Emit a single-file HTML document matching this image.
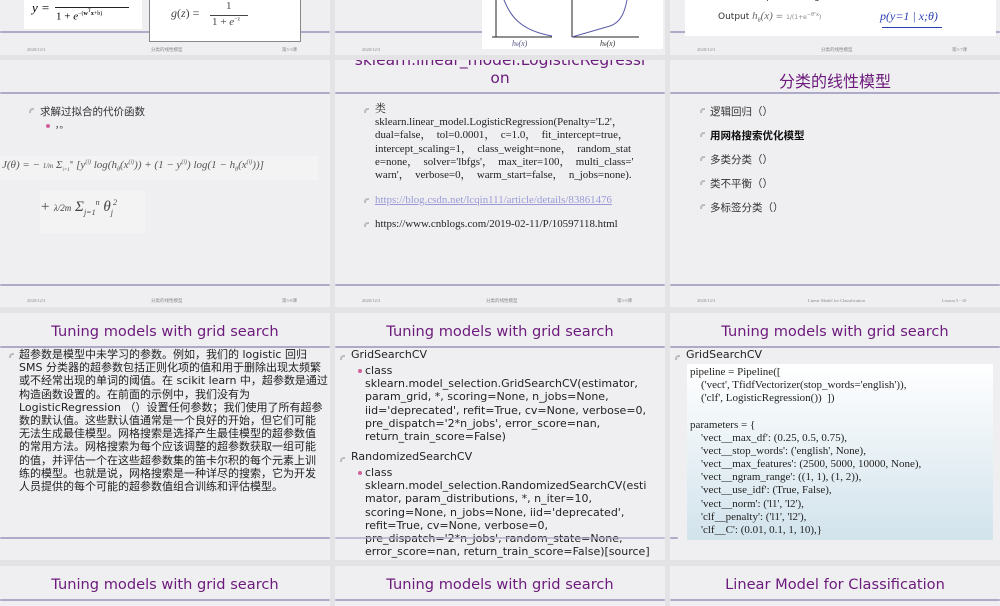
<!DOCTYPE html>
<html><head><meta charset="utf-8"><style>
*{margin:0;padding:0;box-sizing:border-box}
body{width:1000px;height:600px;background:#e3e3e6;position:relative;overflow:hidden;font-family:"DejaVu Sans","Noto Sans CJK SC",sans-serif}
.s{position:absolute;background:#efeff1;overflow:hidden}
.a{position:absolute;white-space:nowrap}
.ln{position:absolute;height:2px;background:#aeabc9;border-radius:1px}
.ft{position:absolute;font-size:4.5px;color:#888;font-family:"Liberation Serif","Noto Sans CJK SC",serif}
.t{position:absolute;left:0;right:0;text-align:center;color:#6c1a7c;font-size:14.6px}
.b{position:absolute;width:5px;height:5px;border-left:2px solid #bbb;border-top:2px solid #bbb;border-radius:4px 0 0 0}
.dot{position:absolute;width:4px;height:4px;border-radius:50%;background:#d4609a}
.sf{font-family:"Liberation Serif","Noto Serif CJK SC",serif}
.cj{font-family:"DejaVu Sans","Noto Sans CJK SC",sans-serif}
</style></head><body>

<!-- Row 0 -->
<div class="s" style="left:0;top:0;width:330px;height:55px">
 <div class="ln" style="left:0;top:31px;width:330px"></div>
 <div class="a" style="left:24px;top:0;width:118px;height:29px;background:#fff"></div>
 <div class="a sf" style="left:32px;top:0;font-size:13px;font-style:italic">y =</div>
 <div class="a" style="left:55px;top:7px;width:74px;height:1px;background:#222"></div>
 <div class="a sf" style="left:56px;top:9px;font-size:11px">1 + <i>e</i><sup style="font-size:6px">−(<b>w</b><sup>T</sup><b>x</b>+b)</sup></div>
 <div class="a" style="left:149px;top:-2px;width:152px;height:44px;background:#fff;border:1px solid #888"></div>
 <div class="a sf" style="left:171px;top:6px;font-size:12px;color:#444"><i>g</i>(<i>z</i>) =</div>
 <div class="a" style="left:210px;top:15px;width:38px;height:1px;background:#444"></div>
 <div class="a sf" style="left:226px;top:0;font-size:11px;color:#444">1</div>
 <div class="a sf" style="left:212px;top:16px;font-size:11px;color:#444">1 + <i>e</i><sup style="font-size:6px">−z</sup></div>
 <div class="ft" style="left:27px;top:47px">2020/12/3</div>
 <div class="ft" style="left:151px;top:47px">分类的线性模型</div>
 <div class="ft" style="left:282px;top:47px">第5-5课</div>
</div>
<div class="s" style="left:335px;top:0;width:330px;height:55px">
 <div class="ln" style="left:0;top:31px;width:150px"></div>
 <div class="a" style="left:147px;top:0;width:181px;height:49px;background:#fff"></div>
 <svg class="a" style="left:147px;top:0" width="181" height="49">
  <path d="M14 0V37M10 37H70" stroke="#222" fill="none"/>
  <path d="M22 0C28 14 36 30 70 36" stroke="#5a5aa8" fill="none"/>
  <path d="M90 0V37M90 37H157" stroke="#222" fill="none"/>
  <path d="M90 37L128 26C140 22 143 10 145 0" stroke="#5a5aa8" fill="none"/>
  <text x="30" y="46" font-size="8" font-style="italic" fill="#558" font-family="Liberation Serif">h<tspan font-size="5">θ</tspan>(x)</text>
  <text x="118" y="46" font-size="8" font-style="italic" fill="#333" font-family="Liberation Serif">h<tspan font-size="5">θ</tspan>(x)</text>
 </svg>
 <div class="ft" style="left:27px;top:47px">2020/12/3</div>
</div>
<div class="s" style="left:670px;top:0;width:330px;height:55px">
 <div class="ln" style="left:0;top:31px;width:330px"></div>
 <div class="a" style="left:15px;top:0;width:311px;height:36px;background:#fff"></div>
 <div class="a" style="left:48px;top:-8px;font-size:9px;color:#333">To make a prediction given new x:</div>
 <div class="a" style="left:48px;top:10px;font-size:9px;color:#333">Output <span class="sf" style="font-style:italic;font-size:11px;color:#666">h<sub style="font-size:6px">θ</sub>(x)</span> <span style="color:#888">= <span style="font-size:6px">1/(1+e<sup>−θᵀx</sup>)</span></span></div>
 <div class="a" style="left:210px;top:9px;font-size:12px;color:#2a3fb0;font-style:italic;font-family:'Liberation Serif',serif">p(y=1 | x;θ)</div>
 <div class="a" style="left:212px;top:27px;width:60px;height:1px;background:#2a3fb0"></div>
 <div class="ft" style="left:27px;top:47px">2020/12/3</div>
 <div class="ft" style="left:151px;top:47px">分类的线性模型</div>
 <div class="ft" style="left:282px;top:47px">第5-7课</div>
</div>

<!-- Row 1 -->
<div class="s" style="left:0;top:60px;width:330px;height:247px">
 <div class="ln" style="left:0;top:32px;width:330px"></div>
 <div class="b" style="left:29px;top:48px"></div>
 <div class="a cj" style="left:40px;top:44px;font-size:10.5px;color:#333">求解过拟合的代价函数</div>
 <div class="dot" style="left:46px;top:64px"></div>
 <div class="a" style="left:55px;top:58px;font-size:9px;color:#333">，。</div>
 <div class="a" style="left:0;top:96px;width:318px;height:24px;background:#f3f3f3"></div>
 <div class="a sf" style="left:2px;top:99px;font-size:11px;color:#555;font-style:italic">J(θ) = − <span style="font-size:7px">1/m</span> Σ<sub style="font-size:5px">i=1</sub><sup style="font-size:5px">m</sup> [y<sup style="font-size:6px">(i)</sup> log(h<sub style="font-size:6px">θ</sub>(x<sup style="font-size:6px">(i)</sup>)) + (1 − y<sup style="font-size:6px">(i)</sup>) log(1 − h<sub style="font-size:6px">θ</sub>(x<sup style="font-size:6px">(i)</sup>))]</div>
 <div class="a" style="left:40px;top:131px;width:105px;height:42px;background:#f3f3f3"></div>
 <div class="a sf" style="left:40px;top:138px;font-size:15px;color:#444;font-style:italic">+ <span style="font-size:9px">λ/2m</span> Σ<sub style="font-size:8px">j=1</sub><sup style="font-size:8px">n</sup> θ<sub style="font-size:8px">j</sub><sup style="font-size:8px">2</sup></div>
 <div class="ln" style="left:0;top:224px;width:330px"></div>
 <div class="ft" style="left:27px;top:238px">2020/12/3</div>
 <div class="ft" style="left:151px;top:238px">分类的线性模型</div>
 <div class="ft" style="left:282px;top:238px">第5-8课</div>
</div>
<div class="s" style="left:335px;top:60px;width:330px;height:247px">
 <div class="t" style="top:-9px;line-height:18px;font-size:15.5px">sklearn.linear_model.LogisticRegressi<br>on</div>
 <div class="ln" style="left:0;top:32px;width:330px"></div>
 <div class="b" style="left:29px;top:48px"></div>
 <div class="a sf" style="left:40px;top:43px;font-size:10.9px;line-height:13.2px;color:#222">类<br>sklearn.linear_model.LogisticRegression(Penalty='L2'，<br>dual=false，&nbsp; tol=0.0001，&nbsp; c=1.0，&nbsp; fit_intercept=true，<br>intercept_scaling=1，&nbsp; class_weight=none，&nbsp; random_stat<br>e=none，&nbsp; solver='lbfgs'，&nbsp; max_iter=100，&nbsp; multi_class='<br>warn'，&nbsp; verbose=0，&nbsp; warm_start=false，&nbsp; n_jobs=none).</div>
 <div class="b" style="left:29px;top:138px"></div>
 <div class="a sf" style="left:40px;top:134px;font-size:10.9px;color:#9a9ad8;text-decoration:underline">https://blog.csdn.net/lcqin111/article/details/83861476</div>
 <div class="b" style="left:29px;top:162px"></div>
 <div class="a sf" style="left:40px;top:158px;font-size:10.9px;color:#222">https://www.cnblogs.com/2019-02-11/P/10597118.html</div>
 <div class="ln" style="left:0;top:224px;width:330px"></div>
 <div class="ft" style="left:27px;top:238px">2020/12/3</div>
 <div class="ft" style="left:151px;top:238px">分类的线性模型</div>
 <div class="ft" style="left:282px;top:238px">第5-9课</div>
</div>
<div class="s" style="left:670px;top:60px;width:330px;height:247px">
 <div class="t" style="top:8px;font-size:16px">分类的线性模型</div>
 <div class="ln" style="left:0;top:32px;width:330px"></div>
 <div class="b" style="left:30px;top:48px"></div>
 <div class="a" style="left:40px;top:44px;font-size:10.5px;color:#333">逻辑回归（）</div>
 <div class="b" style="left:30px;top:72px"></div>
 <div class="a" style="left:40px;top:68px;font-size:10.5px;color:#111;font-weight:bold">用网格搜索优化模型</div>
 <div class="b" style="left:30px;top:96px"></div>
 <div class="a" style="left:40px;top:92px;font-size:10.5px;color:#333">多类分类（）</div>
 <div class="b" style="left:30px;top:120px"></div>
 <div class="a" style="left:40px;top:116px;font-size:10.5px;color:#333">类不平衡（）</div>
 <div class="b" style="left:30px;top:144px"></div>
 <div class="a" style="left:40px;top:140px;font-size:10.5px;color:#333">多标签分类（）</div>
 <div class="ln" style="left:0;top:224px;width:330px"></div>
 <div class="ft" style="left:27px;top:238px">2020/12/3</div>
 <div class="ft" style="left:138px;top:238px">Linear Model for Classification</div>
 <div class="ft" style="left:272px;top:238px">Lesson 5 - 10</div>
</div>

<!-- Row 2 -->
<div class="s" style="left:0;top:313px;width:330px;height:247px">
 <div class="t" style="top:10px">Tuning models with grid search</div>
 <div class="ln" style="left:0;top:33px;width:330px"></div>
 <div class="b" style="left:9px;top:40px"></div>
 <div class="a" style="left:19px;top:35px;font-size:11px;line-height:13.2px;color:#222">超参数是模型中未学习的参数。例如，我们的 logistic 回归<br>SMS 分类器的超参数包括正则化项的值和用于删除出现太频繁<br>或不经常出现的单词的阈值。在 scikit learn 中，超参数是通过<br>构造函数设置的。在前面的示例中，我们没有为<br>LogisticRegression （）设置任何参数；我们使用了所有超参<br>数的默认值。这些默认值通常是一个良好的开始，但它们可能<br>无法生成最佳模型。网格搜索是选择产生最佳模型的超参数值<br>的常用方法。网格搜索为每个应该调整的超参数获取一组可能<br>的值，并评估一个在这些超参数集的笛卡尔积的每个元素上训<br>练的模型。也就是说，网格搜索是一种详尽的搜索，它为开发<br>人员提供的每个可能的超参数值组合训练和评估模型。</div>
 <div class="ln" style="left:0;top:224px;width:330px"></div>
 <div class="ft" style="left:138px;top:249px">Linear Model for Classification</div>
 <div class="ft" style="left:271px;top:249px">Lesson 5 - 11</div>
</div>
<div class="s" style="left:335px;top:313px;width:330px;height:247px">
 <div class="t" style="top:10px">Tuning models with grid search</div>
 <div class="ln" style="left:0;top:33px;width:330px"></div>
 <div class="b" style="left:5px;top:42px"></div>
 <div class="a" style="left:16px;top:35px;font-size:11px;color:#222">GridSearchCV</div>
 <div class="dot" style="left:23px;top:56px"></div>
 <div class="a" style="left:30px;top:51px;font-size:11px;line-height:13.2px;color:#222">class<br>sklearn.model_selection.GridSearchCV(estimator,<br>param_grid, *, scoring=None, n_jobs=None,<br>iid='deprecated', refit=True, cv=None, verbose=0,<br>pre_dispatch='2*n_jobs', error_score=nan,<br>return_train_score=False)</div>
 <div class="b" style="left:5px;top:144px"></div>
 <div class="a" style="left:16px;top:137px;font-size:11px;color:#222">RandomizedSearchCV</div>
 <div class="dot" style="left:23px;top:158px"></div>
 <div class="a" style="left:30px;top:153px;font-size:11px;line-height:13.2px;color:#222">class<br>sklearn.model_selection.RandomizedSearchCV(esti<br>mator, param_distributions, *, n_iter=10,<br>scoring=None, n_jobs=None, iid='deprecated',<br>refit=True, cv=None, verbose=0,<br>pre_dispatch='2*n_jobs', random_state=None,<br>error_score=nan, return_train_score=False)[source]</div>
 <div class="ln" style="left:0;top:224px;width:330px;opacity:.7"></div>
</div>
<div class="s" style="left:670px;top:313px;width:330px;height:247px">
 <div class="t" style="top:10px">Tuning models with grid search</div>
 <div class="ln" style="left:0;top:33px;width:330px"></div>
 <div class="b" style="left:5px;top:42px"></div>
 <div class="a" style="left:16px;top:35px;font-size:11px;color:#222">GridSearchCV</div>
 <div class="a" style="left:17px;top:51px;width:306px;height:176px;background:linear-gradient(#fff,#d2e3ec)"></div>
 <div class="a sf" style="left:20px;top:53px;font-size:11px;line-height:13.15px;color:#222">pipeline = Pipeline([<br>&nbsp;&nbsp;&nbsp;&nbsp;('vect', TfidfVectorizer(stop_words='english')),<br>&nbsp;&nbsp;&nbsp;&nbsp;('clf', LogisticRegression())&nbsp; ])<br><br>parameters = {<br>&nbsp;&nbsp;&nbsp;&nbsp;'vect__max_df': (0.25, 0.5, 0.75),<br>&nbsp;&nbsp;&nbsp;&nbsp;'vect__stop_words': ('english', None),<br>&nbsp;&nbsp;&nbsp;&nbsp;'vect__max_features': (2500, 5000, 10000, None),<br>&nbsp;&nbsp;&nbsp;&nbsp;'vect__ngram_range': ((1, 1), (1, 2)),<br>&nbsp;&nbsp;&nbsp;&nbsp;'vect__use_idf': (True, False),<br>&nbsp;&nbsp;&nbsp;&nbsp;'vect__norm': ('l1', 'l2'),<br>&nbsp;&nbsp;&nbsp;&nbsp;'clf__penalty': ('l1', 'l2'),<br>&nbsp;&nbsp;&nbsp;&nbsp;'clf__C': (0.01, 0.1, 1, 10),}</div>
 <div class="ln" style="left:0;top:224px;width:8px"></div>
 <div class="ft" style="left:138px;top:249px">Linear Model for Classification</div>
 <div class="ft" style="left:271px;top:249px">Lesson 5 - 13</div>
</div>

<!-- Row 3 -->
<div class="s" style="left:0;top:566px;width:330px;height:40px">
 <div class="t" style="top:10px">Tuning models with grid search</div>
 <div class="ln" style="left:0;top:33px;width:330px"></div>
</div>
<div class="s" style="left:335px;top:566px;width:330px;height:40px">
 <div class="t" style="top:10px">Tuning models with grid search</div>
 <div class="ln" style="left:0;top:33px;width:330px"></div>
</div>
<div class="s" style="left:670px;top:566px;width:330px;height:40px">
 <div class="t" style="top:10px">Linear Model for Classification</div>
 <div class="ln" style="left:0;top:33px;width:330px"></div>
</div>
</body></html>
